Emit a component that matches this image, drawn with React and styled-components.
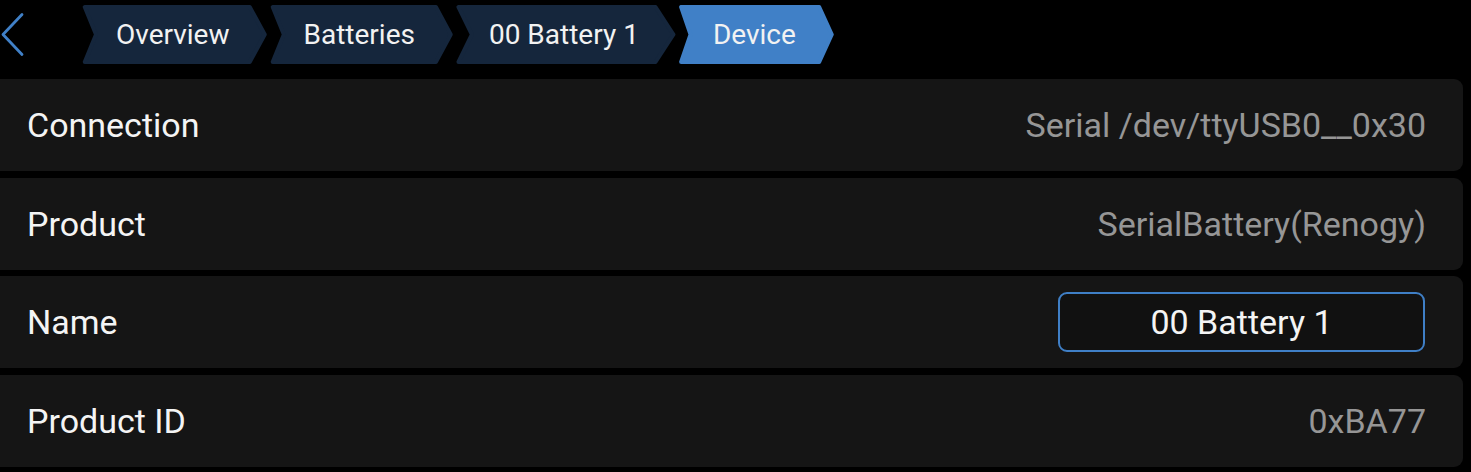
import React from "react"
import styled, { createGlobalStyle } from "styled-components"

const GlobalStyle = createGlobalStyle`
    html, body {
        margin: 0;
        padding: 0;
        background: #000;
    }
    body {
        font-family: Roboto, "Open Sans", "Liberation Sans", sans-serif;
        color: #fff;
    }
`

const crumbs = [
    { label: "Overview" },
    { label: "Batteries" },
    { label: "00 Battery 1" },
    { label: "Device", active: true },
]

const rows = [
    { label: "Connection", value: "Serial /dev/ttyUSB0__0x30" },
    { label: "Product", value: "SerialBattery(Renogy)" },
    { label: "Name", value: "00 Battery 1", editable: true },
    { label: "Product ID", value: "0xBA77" },
]

const CrumbShape = ({ active }) => {
    // chevron drawn inset by 2px and stroked 4px with round joins for soft corners
    const c = active ? "#4080c7" : "#15263c"
    return (
        <ShapeSvg preserveAspectRatio="none" viewBox="0 0 100 59">
            <polygon
                points="2,2 90,2 98,29.5 90,57 2,57 8,29.5"
                fill={c}
                stroke={c}
                strokeWidth="4"
                strokeLinejoin="round"
                vectorEffect="non-scaling-stroke"
            />
        </ShapeSvg>
    )
}

export default function App() {
    return (
        <Page>
            <GlobalStyle />
            <Header>
                <BackButton>
                    <svg width="26" height="46" viewBox="0 0 26 46">
                        <polyline
                            points="22,2.5 3,22.5 22,42.5"
                            fill="none"
                            stroke="#4080c7"
                            strokeWidth="2.8"
                            strokeLinecap="round"
                            strokeLinejoin="round"
                        />
                    </svg>
                </BackButton>
                <Crumbs>
                    {crumbs.map(c => (
                        <Crumb key={c.label}>
                            <CrumbShape active={c.active} />
                            <CrumbText>{c.label}</CrumbText>
                        </Crumb>
                    ))}
                </Crumbs>
            </Header>
            <List>
                {rows.map(r => (
                    <Row key={r.label}>
                        <Label>{r.label}</Label>
                        {r.editable ? (
                            <Field>{r.value}</Field>
                        ) : (
                            <Value>{r.value}</Value>
                        )}
                    </Row>
                ))}
            </List>
        </Page>
    )
}

const Page = styled.div`
    width: 1471px;
    height: 472px;
    overflow: hidden;
    background: #000;
`

const Header = styled.div`
    display: flex;
    align-items: center;
    height: 59px;
    margin-top: 5px;
`

const BackButton = styled.div`
    width: 81px;
    height: 59px;
    display: flex;
    align-items: center;
    padding-left: 0;
    box-sizing: border-box;
`

const Crumbs = styled.div`
    display: flex;
    gap: 0;
    height: 59px;
`

const Crumb = styled.div`
    position: relative;
    display: flex;
    align-items: center;
    height: 59px;
    padding: 0 39px 0 35px;
`

const ShapeSvg = styled.svg`
    position: absolute;
    inset: 0;
    width: 100%;
    height: 100%;
`

const CrumbText = styled.span`
    position: relative;
    font-size: 28px;
    color: #f2f2f2;
    white-space: nowrap;
`

const List = styled.div`
    display: flex;
    flex-direction: column;
    gap: 6.5px;
    margin-top: 15px;
    width: 1463px;
`

const Row = styled.div`
    display: flex;
    align-items: center;
    justify-content: space-between;
    height: 92px;
    background: #151515;
    border-radius: 0 9px 9px 0;
    padding: 0 37px 0 27px;
`

const Label = styled.span`
    font-size: 34px;
    color: #f4f4f4;
`

const Value = styled.span`
    font-size: 34px;
    color: #969696;
`

const Field = styled.div`
    display: flex;
    align-items: center;
    justify-content: center;
    width: 367px;
    height: 60px;
    margin-right: 1px;
    box-sizing: border-box;
    border: 2px solid #3f7fc6;
    border-radius: 9px;
    background: #111;
    font-size: 34px;
    color: #f4f4f4;
`
